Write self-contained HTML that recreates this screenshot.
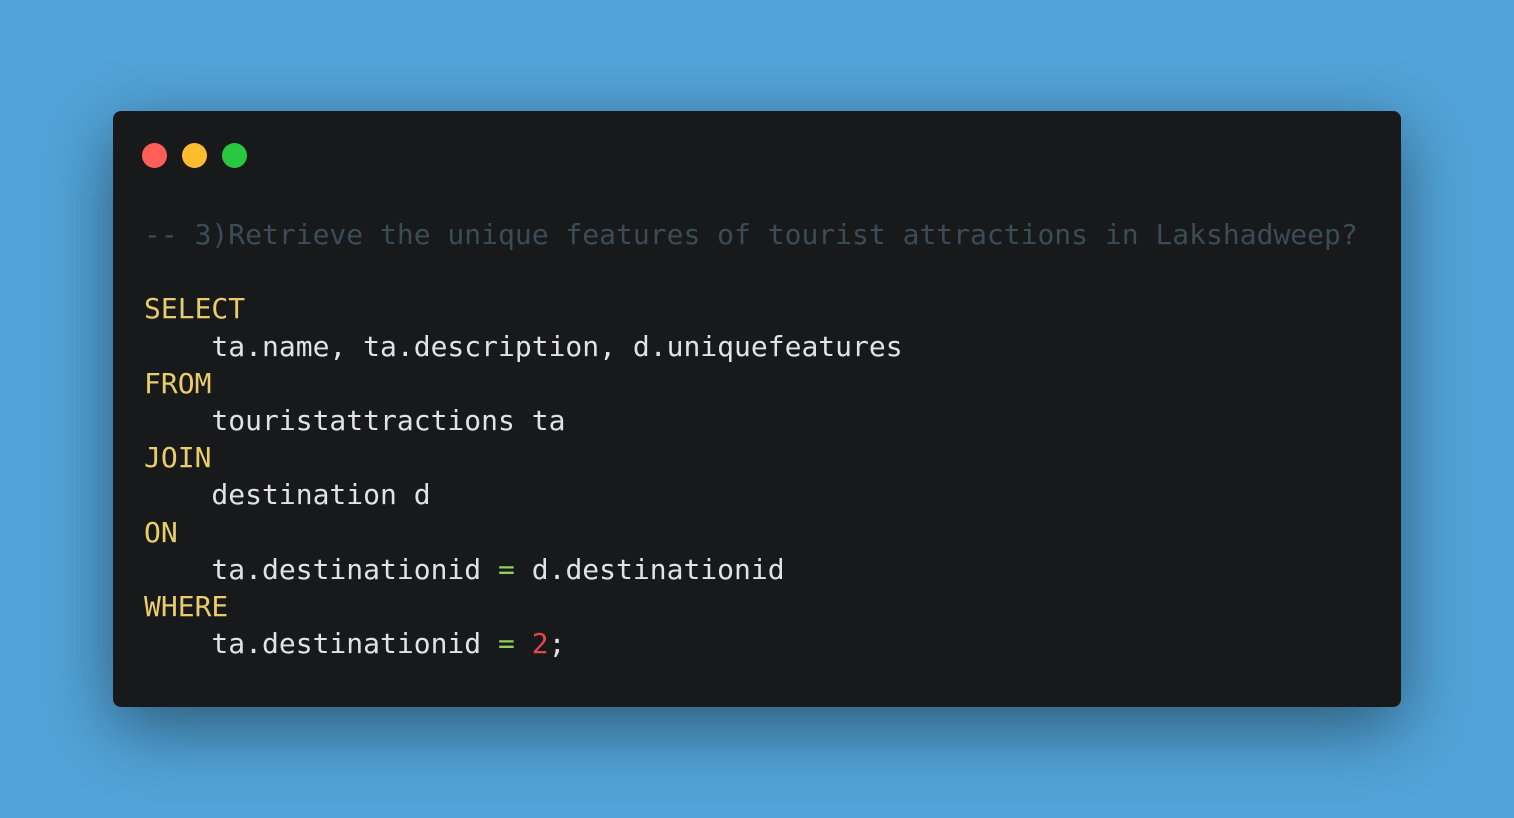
<!DOCTYPE html>
<html><head><meta charset="utf-8"><style>
html,body{margin:0;padding:0}
body{width:1514px;height:818px;background:#52a3d8;position:relative;overflow:hidden}
.win{position:absolute;left:113px;top:111px;width:1288px;height:596px;background:#18191b;border-radius:8px;box-shadow:0 20px 68px rgba(0,0,0,0.45)}
.dot{position:absolute;top:143px;width:25px;height:25px;border-radius:50%}
pre{position:absolute;left:144px;top:216px;margin:0;font-family:"DejaVu Sans Mono","Liberation Mono",monospace;font-size:28px;line-height:37.2px;color:#e2e2e2}
.c{color:#3c4c56}.k{color:#e9cd6c}.o{color:#8fcf5a}.n{color:#e0484e}
</style></head><body>
<div class="win"></div>
<div class="dot" style="left:142px;background:#ff5f57"></div>
<div class="dot" style="left:182px;background:#febc2e"></div>
<div class="dot" style="left:222px;background:#28c840"></div>
<pre><span class="c">-- 3)Retrieve the unique features of tourist attractions in Lakshadweep?</span>

<span class="k">SELECT</span>
    ta.name, ta.description, d.uniquefeatures
<span class="k">FROM</span>
    touristattractions ta
<span class="k">JOIN</span>
    destination d
<span class="k">ON</span>
    ta.destinationid <span class="o">=</span> d.destinationid
<span class="k">WHERE</span>
    ta.destinationid <span class="o">=</span> <span class="n">2</span>;</pre>
</body></html>
